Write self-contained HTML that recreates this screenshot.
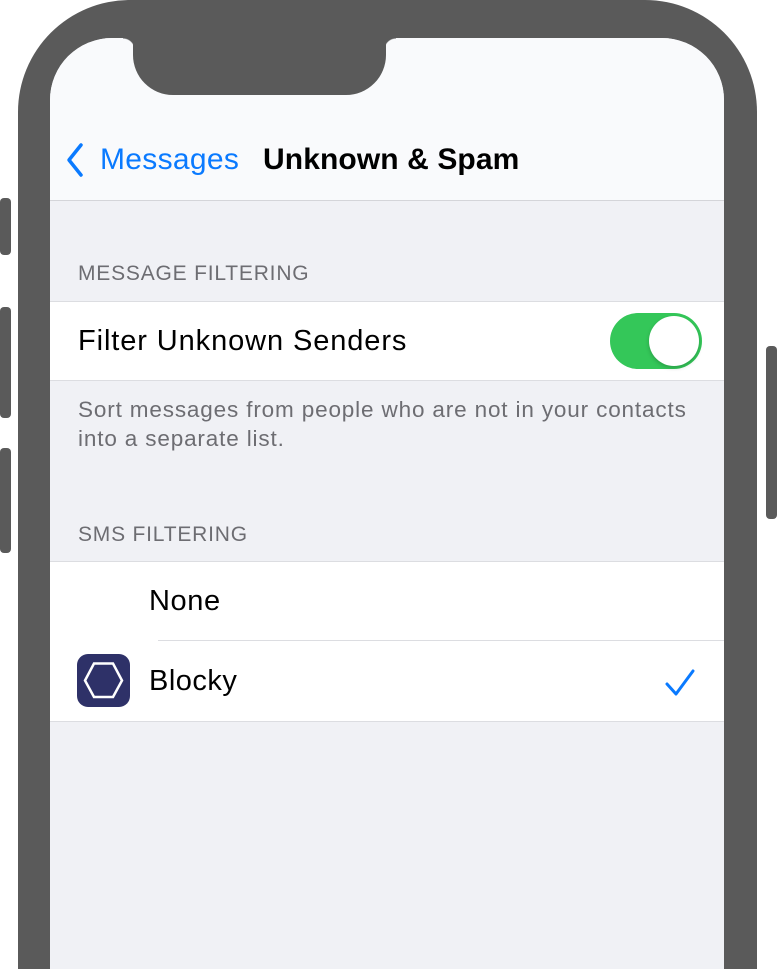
<!DOCTYPE html>
<html><head><style>
*{margin:0;padding:0;box-sizing:border-box}
html,body{width:777px;height:969px;overflow:hidden}
body{background:#fff;position:relative;font-family:"Liberation Sans",sans-serif}
.a{position:absolute;white-space:nowrap}
</style></head><body>
<div class="a" style="left:18px;top:0;width:739px;height:969px;background:#5a5a5a;border-radius:112px 112px 0 0"></div>
<div class="a" style="left:0;top:198px;width:11px;height:57px;background:#5a5a5a;border-radius:4px"></div>
<div class="a" style="left:0;top:307px;width:11px;height:111px;background:#5a5a5a;border-radius:4px"></div>
<div class="a" style="left:0;top:448px;width:11px;height:105px;background:#5a5a5a;border-radius:4px"></div>
<div class="a" style="left:766px;top:346px;width:11px;height:173px;background:#5a5a5a;border-radius:4px"></div>
<div class="a" style="left:50px;top:38px;width:674px;height:931px;background:#f0f1f5;border-radius:62px 62px 0 0;overflow:hidden">
  <div class="a" style="left:0;top:0;width:674px;height:163px;background:#f9fafc;border-bottom:1px solid #d4d5d9"></div>
</div>
<div class="a" style="left:133px;top:30px;width:253px;height:65px;background:#5a5a5a;border-radius:0 0 40px 40px"></div>
<div class="a" style="left:123px;top:38px;width:12px;height:12px;background:radial-gradient(circle at 0 100%,transparent 11px,#5a5a5a 12px)"></div>
<div class="a" style="left:384px;top:38px;width:12px;height:12px;background:radial-gradient(circle at 100% 100%,transparent 11px,#5a5a5a 12px)"></div>
<svg class="a" style="left:62px;top:142px" width="24" height="36"><path d="M19 3 L7 18 L19 33" stroke="#0a7aff" stroke-width="3.5" fill="none" stroke-linecap="round" stroke-linejoin="round"/></svg>
<div class="a" style="left:100px;top:143px;font-size:30px;color:#0a7aff;letter-spacing:0.3px">Messages</div>
<div class="a" style="left:263px;top:143px;font-size:30px;color:#000;font-weight:bold;letter-spacing:0.1px">Unknown &amp; Spam</div>
<div class="a" style="left:78px;top:262px;font-size:21px;color:#6d6d72;letter-spacing:0.8px">MESSAGE FILTERING</div>
<div class="a" style="left:50px;top:301px;width:674px;height:80px;background:#fff;border-top:1px solid #dcdde1;border-bottom:1px solid #dcdde1"></div>
<div class="a" style="left:78px;top:325px;font-size:29px;color:#000;letter-spacing:0.9px">Filter Unknown Senders</div>
<div class="a" style="left:610px;top:313px;width:92px;height:56px;background:#34c759;border-radius:28px"></div>
<div class="a" style="left:649px;top:316px;width:50px;height:50px;background:#fff;border-radius:25px;box-shadow:0 2px 4px rgba(0,0,0,.2)"></div>
<div class="a" style="left:78px;top:395px;font-size:22.5px;color:#6d6d72;line-height:29px;letter-spacing:0.85px">Sort messages from people who are not in your contacts<br>into a separate list.</div>
<div class="a" style="left:78px;top:523px;font-size:21px;color:#6d6d72;letter-spacing:0.8px">SMS FILTERING</div>
<div class="a" style="left:50px;top:561px;width:674px;height:161px;background:#fff;border-top:1px solid #dcdde1;border-bottom:1px solid #dcdde1"></div>
<div class="a" style="left:158px;top:640px;width:566px;height:1px;background:#dcdde1"></div>
<div class="a" style="left:149px;top:585px;font-size:29px;color:#000;letter-spacing:0.6px">None</div>
<div class="a" style="left:77px;top:654px;width:53px;height:53px;background:#2e3168;border-radius:11px"></div>
<svg class="a" style="left:77px;top:654px" width="53" height="53"><polygon points="17,9.5 36,9.5 45,26.5 36,43 17,43 8,26.5" fill="none" stroke="#fff" stroke-width="2.5"/></svg>
<div class="a" style="left:149px;top:665px;font-size:29px;color:#000;letter-spacing:0.5px">Blocky</div>
<svg class="a" style="left:664px;top:668px" width="32" height="30"><path d="M3 16 L12 26 L29 3" stroke="#0a7aff" stroke-width="3" fill="none" stroke-linecap="round" stroke-linejoin="round"/></svg>
</body></html>
